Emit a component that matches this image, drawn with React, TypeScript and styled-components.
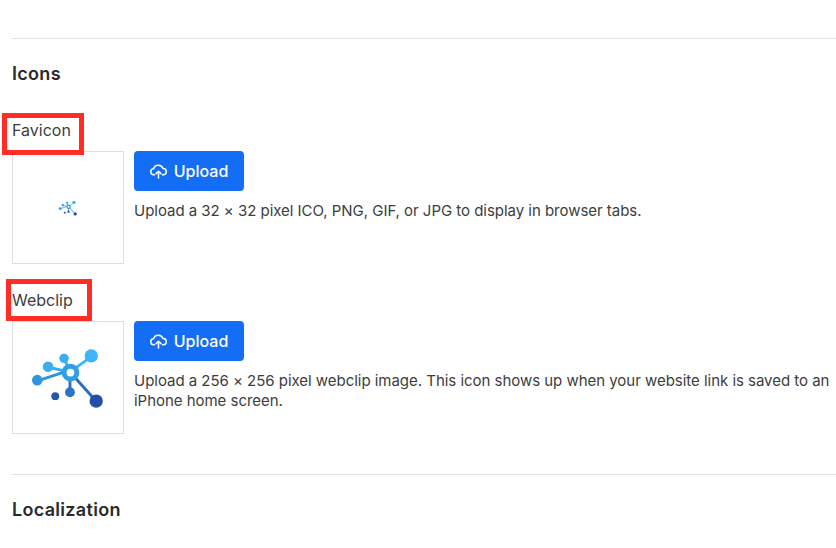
import React from 'react'
import styled, {createGlobalStyle} from 'styled-components'

const GlobalStyle = createGlobalStyle`
  html, body {
    margin: 0;
    padding: 0;
    background: #fff;
    overflow: hidden;
  }
`

const Page = styled.div`
  width: 836px;
  height: 548px;
  overflow: hidden;
  padding: 38px 0 0 12px;
  box-sizing: border-box;
  font-family: Inter, 'Liberation Sans', sans-serif;
  color: #333;
`

const Section = styled.section`
  border-top: 1px solid #e2e2e2;
  padding: 23px 0 40px;
`

const SectionTitle = styled.h2`
  margin: 0;
  font-size: 18px;
  line-height: 24px;
  font-weight: 600;
  letter-spacing: 0.3px;
  color: #2a2a2a;
`

const IconsList = styled.div`
  display: flex;
  flex-direction: column;
  gap: 26px;
  margin-top: 34px;
`

const Field = styled.div`
  display: flex;
  flex-direction: column;
  gap: 11px;
`

const Label = styled.div`
  position: relative;
  font-size: 16px;
  line-height: 20px;
  color: #3d3d3d;
`

const Callout = styled.span<{$left: number; $top: number; $width: number}>`
  position: absolute;
  top: ${p => p.$top}px;
  left: ${p => p.$left}px;
  width: ${p => p.$width}px;
  height: 42px;
  box-sizing: border-box;
  border: 5px solid #ff2d26;
`

const FieldRow = styled.div`
  display: flex;
  gap: 10px;
`

const Preview = styled.div`
  flex: none;
  width: 112px;
  height: 113px;
  box-sizing: border-box;
  border: 1px solid #dedede;
  display: flex;
  align-items: center;
  justify-content: center;
`

const UploadColumn = styled.div`
  width: 702px;
  display: flex;
  flex-direction: column;
  align-items: flex-start;
  gap: 10px;
`

const UploadButton = styled.button`
  width: 110px;
  height: 40px;
  display: flex;
  align-items: center;
  justify-content: center;
  gap: 7px;
  border: 0;
  border-radius: 4px;
  padding: 0;
  background: #146ef5;
  color: #fff;
  font-family: inherit;
  font-size: 16px;
  font-weight: 500;
`

const Hint = styled.p`
  margin: 0;
  font-size: 15px;
  line-height: 20px;
  letter-spacing: -0.03px;
  color: #3d3d3d;
`

const CloudIcon = () => (
    <svg width="17" height="15" viewBox="0 0 17 15" fill="none" stroke="#fff" strokeWidth="1.5" strokeLinecap="round" strokeLinejoin="round">
        <path d="M4.6 10.8H4a3 3 0 0 1-.4-6A5 5 0 0 1 13 4.4a3.2 3.2 0 0 1 .2 6.4h-.8"/>
        <path d="M8.5 14V7.4M6 9.6l2.5-2.4L11 9.6"/>
    </svg>
)

const NetworkLogo: React.FC<{size: number}> = ({size}) => (
    <svg width={size} height={size} viewBox="0 0 112 112">
        <g strokeWidth="3" fill="none">
            <path d="M58 50 L80 34" stroke="#3db5f7"/>
            <path d="M58 50 L52 36" stroke="#3aaef0"/>
            <path d="M58 50 L36 45" stroke="#3aaef0"/>
            <path d="M58 48 L25 59" stroke="#2f93de"/>
            <path d="M58 50 L58 71" stroke="#2a74c5"/>
            <path d="M58 50 L85 80" stroke="#2a6cc0"/>
        </g>
        <circle cx="58.5" cy="50.5" r="9" fill="#2f9fe8"/>
        <circle cx="58.5" cy="50.5" r="4" fill="#fff"/>
        <circle cx="79.7" cy="33.5" r="6.8" fill="#3db5f7"/>
        <circle cx="52" cy="36" r="4.8" fill="#3aaef0"/>
        <circle cx="35.7" cy="44.5" r="5.4" fill="#3aaef0"/>
        <circle cx="24.7" cy="58.2" r="5.4" fill="#2f93de"/>
        <circle cx="58" cy="70.5" r="5" fill="#2a74c5"/>
        <circle cx="43" cy="74.5" r="4" fill="#2458ae"/>
        <circle cx="84.7" cy="79.5" r="6.8" fill="#2350a6"/>
    </svg>
)

const App: React.FC = () => {
    return <Page>
        <GlobalStyle/>
        <Section>
            <SectionTitle>Icons</SectionTitle>
            <IconsList>
                <Field>
                    <Label>Favicon<Callout $left={-10} $top={-7} $width={82}/></Label>
                    <FieldRow>
                        <Preview><NetworkLogo size={28}/></Preview>
                        <UploadColumn>
                            <UploadButton><CloudIcon/>Upload</UploadButton>
                            <Hint>Upload a 32 × 32 pixel ICO, PNG, GIF, or JPG to display in browser tabs.</Hint>
                        </UploadColumn>
                    </FieldRow>
                </Field>
                <Field>
                    <Label>Webclip<Callout $left={-6} $top={-11} $width={86}/></Label>
                    <FieldRow>
                        <Preview><NetworkLogo size={112}/></Preview>
                        <UploadColumn>
                            <UploadButton><CloudIcon/>Upload</UploadButton>
                            <Hint>Upload a 256 × 256 pixel webclip image. This icon shows up when your website link is saved to an iPhone home screen.</Hint>
                        </UploadColumn>
                    </FieldRow>
                </Field>
            </IconsList>
        </Section>
        <Section>
            <SectionTitle>Localization</SectionTitle>
        </Section>
    </Page>
}

export default App
